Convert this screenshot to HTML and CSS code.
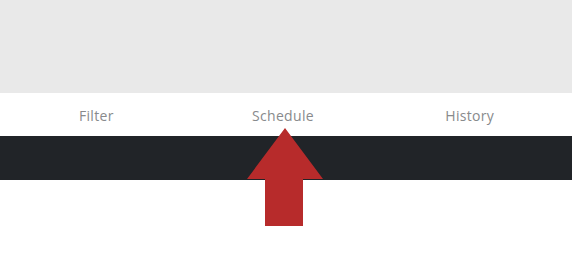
FILE: index.html
```html
<!DOCTYPE html>
<html>
<head>
<meta charset="utf-8">
<link rel="stylesheet" href="styles.css">
</head>
<body>
<div class="page">
  <div class="top"></div>
  <nav class="tabs">
    <span class="tab">Filter</span>
    <span class="tab">Schedule</span>
    <span class="tab">History</span>
  </nav>
  <div class="bar"></div>
  <svg class="arrow" width="78" height="99" viewBox="0 0 78 99">
    <polygon points="39,0 77,51 57,51 57,98 19,98 19,51 1,51" fill="#b72b2b"/>
  </svg>
</div>
</body>
</html>
```
FILE: styles.css
```css
html, body { margin: 0; padding: 0; background: #fff; }
.page { position: relative; width: 572px; height: 266px; overflow: hidden; font-family: "Open Sans", sans-serif; }
.top { height: 93px; background: #e9e9e9; }
.tabs { height: 43px; box-sizing: border-box; display: grid; grid-template-columns: 1fr 1fr 1fr; align-items: center; padding: 2px 9px 0 3px; }
.tab { text-align: center; font-size: 14px; color: #888a8c; letter-spacing: 0.3px; }
.bar { height: 44px; background: #212428; }
.arrow { position: absolute; left: 246px; top: 128px; }
```
